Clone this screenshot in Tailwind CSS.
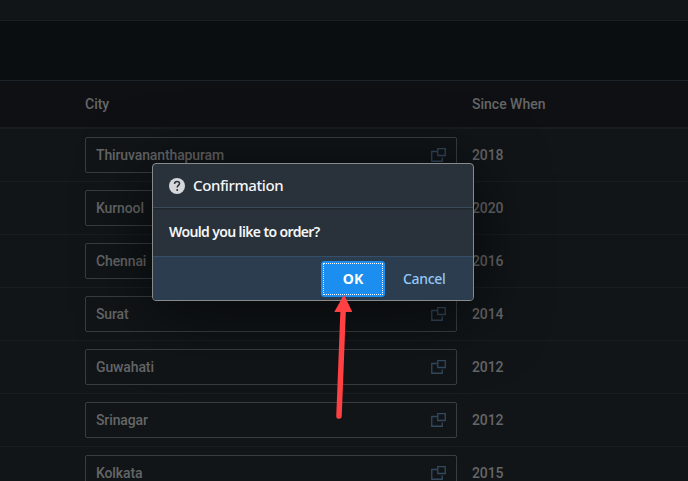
<!DOCTYPE html>
<html lang="en">
<head>
<meta charset="utf-8">
<title>Confirmation</title>
<script src="https://cdn.jsdelivr.net/npm/@tailwindcss/browser@4"></script>
</head>
<body class="relative h-[481px] w-[688px] overflow-hidden bg-[#111518] font-[Roboto,sans-serif] text-sm font-medium text-[#656667]">
<svg class="hidden"><symbol id="vh" viewBox="0 0 15 14"><path d="M6 3.500H.75v9.750h10.500V9.500M6.750.5h7.500v7h-7.500z" fill="none" stroke="#33495d" stroke-width="1.300"/></symbol></svg>
<div class="h-[21px] border-b border-[#1a1f23] bg-[#111518]"></div>
<div class="h-[60px] border-b border-[#1c232b] bg-[#0a0e11]"></div>
<div class="flex h-12 items-center border-b-2 border-[#191b1e] bg-[#0f1013] pb-px pl-[85px]">
  <span class="w-[387px]">City</span><span>Since When</span>
</div>
<main class="tracking-[-0.12px]">
  <div class="flex h-[53px] items-center border-b border-[#191d20] pl-[85px]"><div class="mr-[15px] flex h-9 w-[372px] items-center justify-between rounded-[2px] border border-[#393d42] pl-2.5 pr-[10px]"><span>Thiruvananthapuram</span><svg class="h-3.5 w-[15px]"><use href="#vh"/></svg></div><span>2018</span></div>
  <div class="flex h-[53px] items-center border-b border-[#191d20] pl-[85px]"><div class="mr-[15px] flex h-9 w-[372px] items-center justify-between rounded-[2px] border border-[#393d42] pl-2.5 pr-[10px]"><span>Kurnool</span><svg class="h-3.5 w-[15px]"><use href="#vh"/></svg></div><span>2020</span></div>
  <div class="flex h-[53px] items-center border-b border-[#191d20] pl-[85px]"><div class="mr-[15px] flex h-9 w-[372px] items-center justify-between rounded-[2px] border border-[#393d42] pl-2.5 pr-[10px]"><span>Chennai</span><svg class="h-3.5 w-[15px]"><use href="#vh"/></svg></div><span>2016</span></div>
  <div class="flex h-[53px] items-center border-b border-[#191d20] pl-[85px]"><div class="mr-[15px] flex h-9 w-[372px] items-center justify-between rounded-[2px] border border-[#393d42] pl-2.5 pr-[10px]"><span>Surat</span><svg class="h-3.5 w-[15px]"><use href="#vh"/></svg></div><span>2014</span></div>
  <div class="flex h-[53px] items-center border-b border-[#191d20] pl-[85px]"><div class="mr-[15px] flex h-9 w-[372px] items-center justify-between rounded-[2px] border border-[#393d42] pl-2.5 pr-[10px]"><span>Guwahati</span><svg class="h-3.5 w-[15px]"><use href="#vh"/></svg></div><span>2012</span></div>
  <div class="flex h-[53px] items-center border-b border-[#191d20] pl-[85px]"><div class="mr-[15px] flex h-9 w-[372px] items-center justify-between rounded-[2px] border border-[#393d42] pl-2.5 pr-[10px]"><span>Srinagar</span><svg class="h-3.5 w-[15px]"><use href="#vh"/></svg></div><span>2012</span></div>
  <div class="flex h-[53px] items-center border-b border-[#191d20] pl-[85px]"><div class="mr-[15px] flex h-9 w-[372px] items-center justify-between rounded-[2px] border border-[#393d42] pl-2.5 pr-[10px]"><span>Kolkata</span><svg class="h-3.5 w-[15px]"><use href="#vh"/></svg></div><span>2015</span></div>
</main>
<section role="dialog" class="absolute left-[152px] top-[163px] flex h-[138px] w-[322px] flex-col overflow-hidden rounded border border-[#888b8b] bg-[#29313a] font-['Noto_Sans',sans-serif] text-[#f5f6f7] shadow-[0_10px_70px_0_rgba(0,0,0,0.65)]">
  <header class="flex h-11 items-center gap-2 border-b border-[#3a4a5a] pl-4 shadow-[0_1px_2px_rgba(0,0,0,0.3)]">
    <svg class="size-4" viewBox="0 0 16 16"><circle cx="8" cy="8" r="8" fill="#d5d7da"/><path d="M5.500 5.900C5.600 4.200 6.600 3.500 8 3.500c1.500 0 2.500.8 2.500 2.100 0 1.700-2.300 1.900-2.300 4" fill="none" stroke="#29313a" stroke-width="1.500"/><circle cx="8.200" cy="11.900" r="1" fill="#29313a"/></svg>
    <h1 class="text-[15px] font-medium tracking-[-0.4px]">Confirmation</h1>
  </header>
  <p class="flex h-12 items-center pl-4 font-semibold tracking-[-0.63px]">Would you like to order?</p>
  <footer class="flex flex-1 items-center border-t border-[#354f6b] bg-[#2c3d4f] pl-[168px]">
    <button class="h-9 w-16 rounded-[3px] border border-[#1b8ef0] bg-[#1b8ef0] p-px font-bold text-white"><span class="flex h-full items-center justify-center border border-dotted border-white">OK</span></button>
    <button class="ml-[18px] tracking-[-0.3px] text-[#91c8f6]">Cancel</button>
  </footer>
</section>
<svg class="absolute left-[330px] top-[290px]" width="30" height="132" viewBox="330 290 30 132"><path d="M343.200 309 339 416" stroke="#ff4144" stroke-width="5.500" stroke-linecap="round"/><path d="M344 294.500 352.300 312h-18z" fill="#ff4144"/></svg>
</body>
</html>
